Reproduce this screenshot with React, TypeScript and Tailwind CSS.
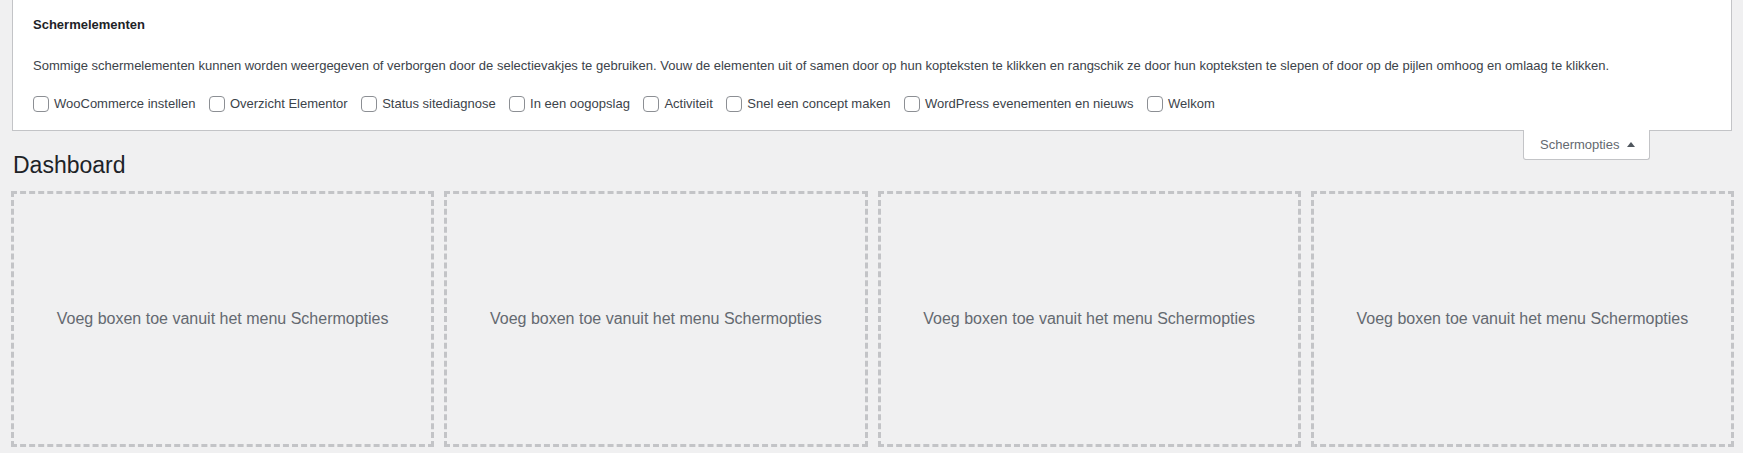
import { useState } from 'react';

const schermElementen = [
  'WooCommerce instellen',
  'Overzicht Elementor',
  'Status sitediagnose',
  'In een oogopslag',
  'Activiteit',
  'Snel een concept maken',
  'WordPress evenementen en nieuws',
  'Welkom',
];

export default function App() {
  const [checked, setChecked] = useState<Record<string, boolean>>({});

  return (
    <div className="min-h-[453px] bg-[#f0f0f1] pl-[12px] pr-[11px] font-['Liberation_Sans',Arial,sans-serif] text-[13px] text-[#3c434a]">
      {/* Schermopties panel */}
      <div className="border-x border-b border-[#c3c4c7] bg-white pl-[20px] pr-[20px] pt-[15px] pb-[16px]">
        <div className="font-semibold leading-[20px] text-[#1d2327]">Schermelementen</div>
        <p className="mt-[21px] leading-[20px]">
          Sommige schermelementen kunnen worden weergegeven of verborgen door de selectievakjes te gebruiken. Vouw de elementen uit of samen door op hun kopteksten te klikken en rangschik ze door hun kopteksten te slepen of door op de pijlen omhoog en omlaag te klikken.
        </p>
        <div className="mt-[18px] flex items-center gap-[13.5px] leading-[20px]">
          {schermElementen.map(label => (
            <label key={label} className="flex items-center gap-[5px] whitespace-nowrap cursor-pointer">
              <span
                onClick={() => setChecked(c => ({ ...c, [label]: !c[label] }))}
                className="h-[16px] w-[16px] rounded-[4px] border border-[#8c8f94] bg-white"
              />
              {label}
            </label>
          ))}
        </div>
      </div>

      {/* Tab + title */}
      <div className="-mt-px flex items-start justify-between">
        <h1 className="ml-[1px] mt-[20px] text-[23px] leading-[30px] font-normal text-[#1d2327]">Dashboard</h1>
        <button className="mr-[82px] flex h-[30px] w-[127px] items-center gap-[8px] rounded-b-[3px] border-x border-b border-[#c3c4c7] bg-white pl-[16px] text-[13px] text-[#646970]">
          Schermopties
          <svg width="8" height="5" viewBox="0 0 8 5" className="mb-px">
            <path d="M0 5 L4 0 L8 5 Z" fill="#50575e" />
          </svg>
        </button>
      </div>

      {/* Empty widget columns */}
      <div className="mt-[14px] grid grid-cols-4 gap-[16px] pl-[2px] pr-[1px]">
        {[0, 1, 2, 3].map(i => (
          <div
            key={i}
            className="flex h-[250px] items-center justify-center px-[32px] text-center text-[16px] leading-[24px] text-[#646970] outline-[3px] outline-dashed outline-[#c3c4c7]"
          >
            Voeg boxen toe vanuit het menu Schermopties
          </div>
        ))}
      </div>
    </div>
  );
}
